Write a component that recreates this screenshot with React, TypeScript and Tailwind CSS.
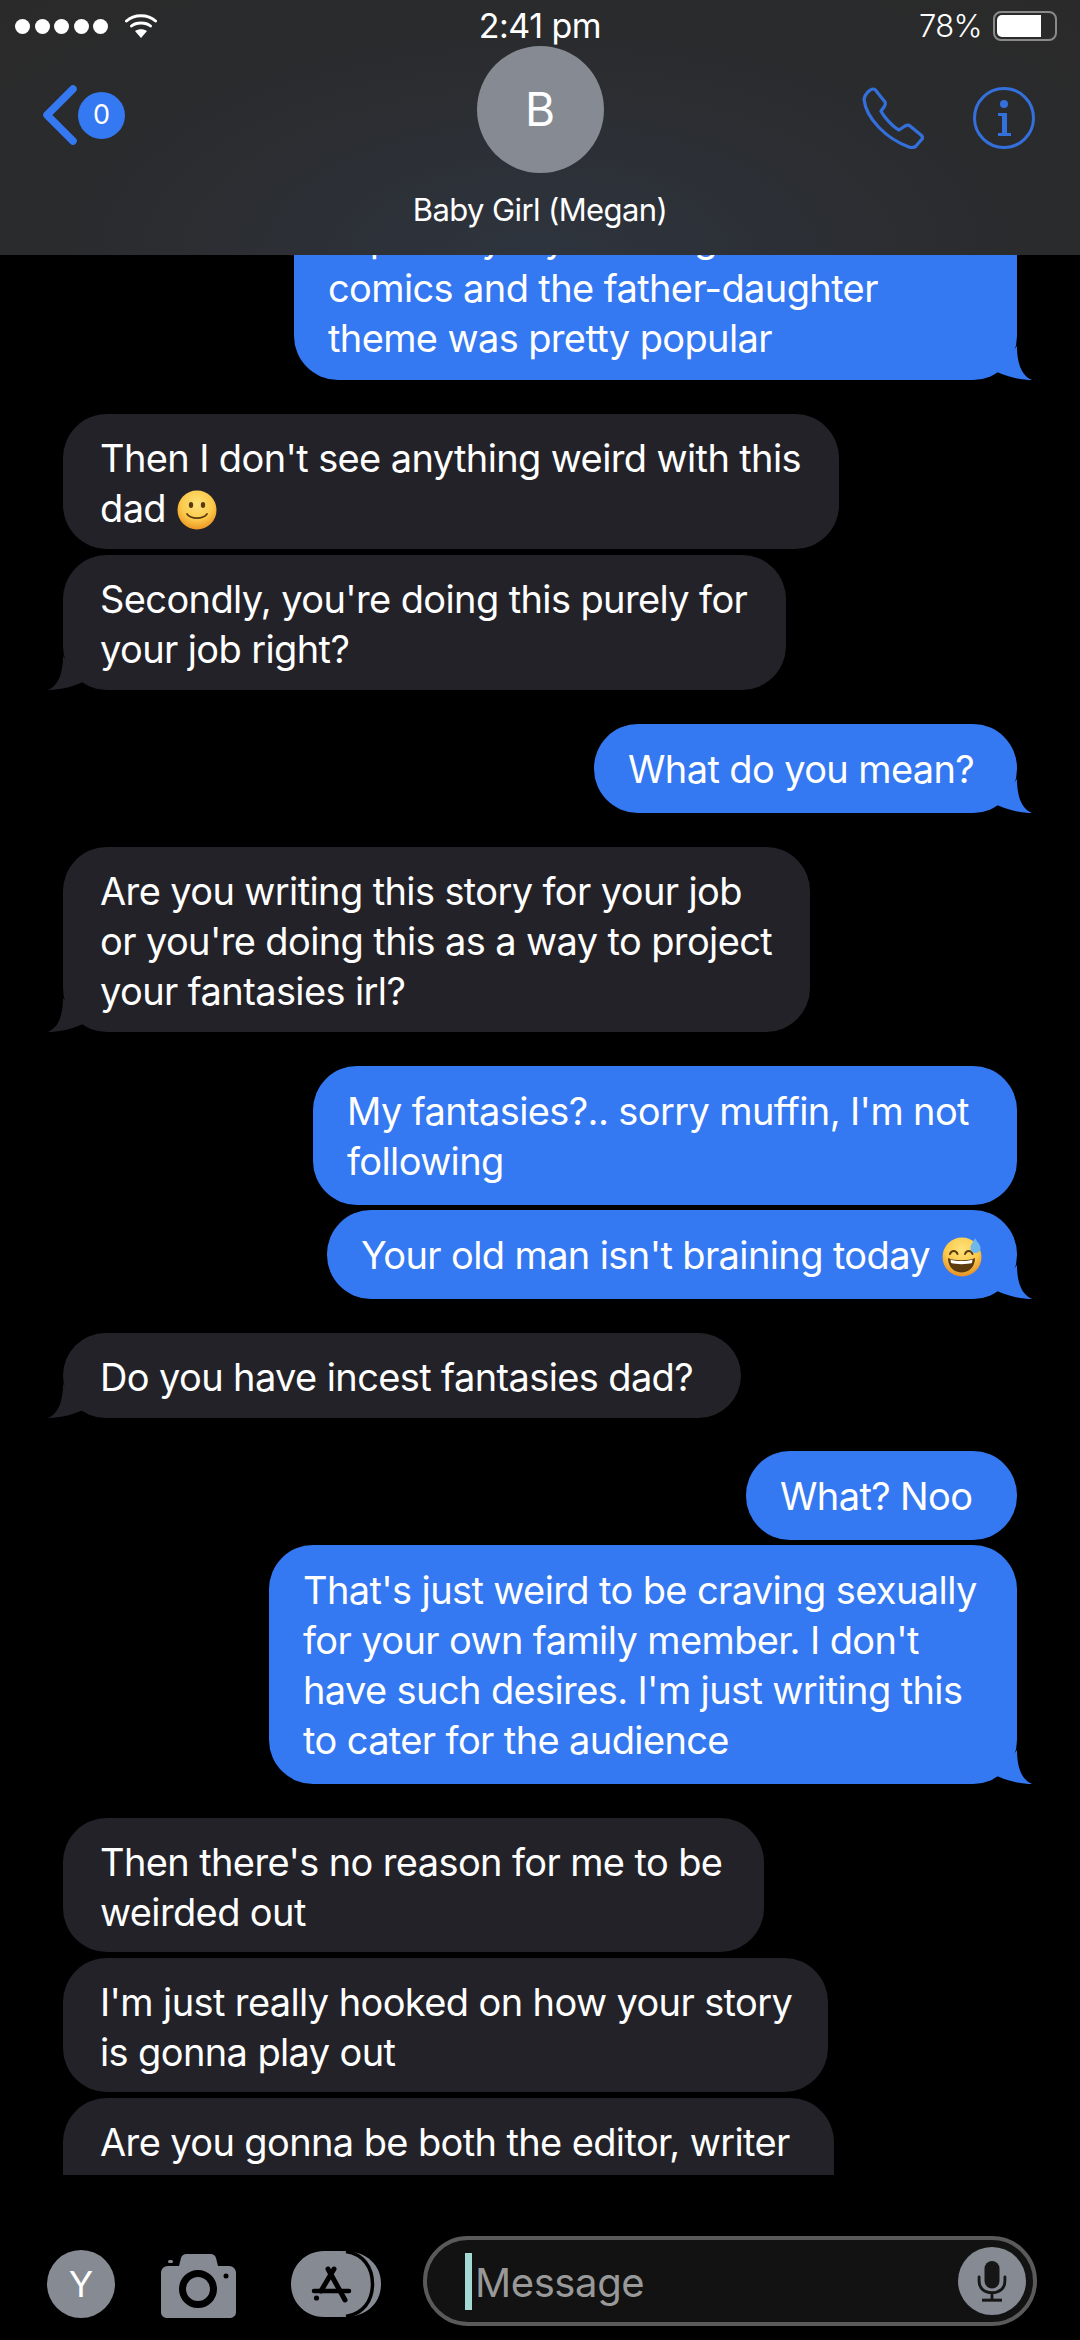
import React from 'react';

type Message = {
  lines: React.ReactNode[];
  mine?: boolean;
  tail?: boolean;
  box: string;
};

const SmileEmoji = () => (
  <svg viewBox="0 0 40 40" className="inline-block w-[40px] h-[40px] align-[-8px] ml-[1px]">
    <defs>
      <radialGradient id="smile" cx="50%" cy="35%" r="68%">
        <stop offset="0%" stopColor="#ffe27a" />
        <stop offset="60%" stopColor="#fbc94a" />
        <stop offset="100%" stopColor="#ea8f1e" />
      </radialGradient>
    </defs>
    <circle cx="20" cy="20" r="19.5" fill="url(#smile)" />
    <ellipse cx="14" cy="15" rx="2.2" ry="3" fill="#5c3a10" />
    <ellipse cx="26" cy="15" rx="2.2" ry="3" fill="#5c3a10" />
    <path d="M10 24 C14 29.5 26 29.5 30 24" fill="none" stroke="#5c3a10" strokeWidth="1.8" strokeLinecap="round" />
  </svg>
);

const SweatEmoji = () => (
  <svg viewBox="0 0 40 40" className="inline-block w-[40px] h-[40px] align-[-8px] ml-[2px]">
    <defs>
      <radialGradient id="sweat" cx="50%" cy="30%" r="72%">
        <stop offset="0%" stopColor="#ffe27a" />
        <stop offset="60%" stopColor="#fbc94a" />
        <stop offset="100%" stopColor="#e58a20" />
      </radialGradient>
    </defs>
    <circle cx="20" cy="20" r="19.5" fill="url(#sweat)" />
    <path d="M8 17 C9.5 13 14 13 15.5 17" fill="none" stroke="#5c3a10" strokeWidth="2" strokeLinecap="round" />
    <path d="M23 17 C24.5 13 29 13 30.5 17" fill="none" stroke="#5c3a10" strokeWidth="2" strokeLinecap="round" />
    <path d="M6 21 C12 24 27 24 33 21 C33 30 27 35.5 19.5 35.5 C12 35.5 6 30 6 21 Z" fill="#5c3a10" />
    <path d="M8.5 22.5 C14 24.5 25 24.5 30.5 22.5 L30 26 C25 27.5 14 27.5 9 26 Z" fill="#ffffff" />
    <path d="M33 1 C35 5 38.5 7.5 38.5 11 C38.5 14 36 16 33.5 16 C30.5 16 28.5 14 28.5 11 C28.5 7.5 31.5 5 33 1 Z" fill="#6fb9ea" />
  </svg>
);

const messages: Message[] = [
  {
    mine: true,
    tail: true,
    box: 'w-[723px] h-[184px] -mt-[59px]',
    lines: ['Especially my creating', 'comics and the father-daughter', 'theme was pretty popular'],
  },
  {
    box: 'w-[776px] h-[135px] mt-[34px]',
    lines: ["Then I don't see anything weird with this", <>dad <SmileEmoji /></>],
  },
  {
    tail: true,
    box: 'w-[723px] h-[135px] mt-[6px]',
    lines: ["Secondly, you're doing this purely for", 'your job right?'],
  },
  { mine: true, tail: true, box: 'w-[423px] h-[89px] mt-[34px]', lines: ['What do you mean?'] },
  {
    tail: true,
    box: 'w-[747px] h-[185px] mt-[34px]',
    lines: ['Are you writing this story for your job', "or you're doing this as a way to project", 'your fantasies irl?'],
  },
  {
    mine: true,
    box: 'w-[704px] h-[139px] mt-[34px]',
    lines: ["My fantasies?.. sorry muffin, I'm not", 'following'],
  },
  {
    mine: true,
    tail: true,
    box: 'w-[690px] h-[89px] mt-[5px]',
    lines: [<>Your old man isn't braining today <SweatEmoji /></>],
  },
  { tail: true, box: 'w-[678px] h-[85px] mt-[34px]', lines: ['Do you have incest fantasies dad?'] },
  { mine: true, box: 'w-[271px] h-[89px] mt-[33px]', lines: ['What? Noo'] },
  {
    mine: true,
    tail: true,
    box: 'w-[748px] h-[239px] mt-[5px]',
    lines: [
      "That's just weird to be craving sexually",
      "for your own family member. I don't",
      "have such desires. I'm just writing this",
      'to cater for the audience',
    ],
  },
  {
    box: 'w-[701px] h-[134px] mt-[34px]',
    lines: ["Then there's no reason for me to be", 'weirded out'],
  },
  {
    box: 'w-[765px] h-[134px] mt-[6px]',
    lines: ["I'm just really hooked on how your story", 'is gonna play out'],
  },
  {
    box: 'w-[771px] h-[134px] mt-[6px]',
    lines: ['Are you gonna be both the editor, writer', '\u00a0'],
  },
];

const Tail = ({ mine }: { mine?: boolean }) => (
  <svg
    viewBox="0 0 36 34"
    className={
      mine
        ? 'absolute bottom-0 -right-[15px] w-[36px] h-[34px] fill-[#3478f2]'
        : 'absolute bottom-0 -left-[15px] w-[36px] h-[34px] -scale-x-100 fill-[#232228]'
    }
  >
    <path d="M21 0 C21 14 24 29 36 34 C27 34 14 32 1 26 Z" />
  </svg>
);

const Bubble = ({ message }: { message: Message }) => (
  <div
    className={`relative flex-none flex flex-col justify-center rounded-[44px] text-[38px] leading-[50px] tracking-[-0.62px] text-white whitespace-nowrap ${message.box} ${
      message.mine ? 'self-end bg-[#3478f2] pl-[34px]' : 'self-start bg-[#232228] pl-[37px] pt-[3px]'
    }`}
  >
    {message.lines.map((line, i) => (
      <div key={i}>{line}</div>
    ))}
    {message.tail && <Tail mine={message.mine} />}
  </div>
);

const StatusBar = () => (
  <div className="grid grid-cols-3 items-center h-[52px] px-[15px] text-white">
    <div className="flex items-center">
      <div className="flex gap-[4.5px]">
        <span className="w-[15px] h-[15px] rounded-full bg-white" />
        <span className="w-[15px] h-[15px] rounded-full bg-white" />
        <span className="w-[15px] h-[15px] rounded-full bg-white" />
        <span className="w-[15px] h-[15px] rounded-full bg-white" />
        <span className="w-[15px] h-[15px] rounded-full bg-white" />
      </div>
      <svg viewBox="0 0 32 26" className="w-[32px] h-[26px] ml-[17px]">
        <path d="M1.5 8 C9 1 23 1 30.5 8" fill="none" stroke="#fff" strokeWidth="3" strokeLinecap="round" />
        <path d="M6.5 13 C11 9 21 9 25.5 13" fill="none" stroke="#fff" strokeWidth="3" strokeLinecap="round" />
        <path d="M10 18 L16 25 L22 18 C18.5 15.5 13.5 15.5 10 18 Z" fill="#fff" />
      </svg>
    </div>
    <div className="-mt-[2px] text-center text-[34px] tracking-[-0.5px] whitespace-nowrap">2:41 pm</div>
    <div className="flex items-center justify-end pr-[8px]">
      <span className="text-[31px] tracking-[-0.6px] font-light">78%</span>
      <div className="relative ml-[11px] w-[64px] h-[30px] rounded-[8px] border-[2px] border-[#8a8a8a] p-[2px]">
        <div className="w-[44px] h-full rounded-l-[5px] bg-white" />
      </div>
    </div>
  </div>
);

const Header = () => (
  <div className="flex-none h-[255px] bg-[radial-gradient(ellipse_at_50%_100%,#2e343e_0%,#2a2b2d_62%,#2a2a2a_100%)]">
    <StatusBar />
    <div className="grid grid-cols-3 -mt-[6px]">
      <div className="flex items-center pl-[41px] pt-[39px] self-start">
        <svg viewBox="0 0 38 60" className="w-[38px] h-[60px]">
          <path d="M32 4 L6 30 L32 56" fill="none" stroke="#3478f2" strokeWidth="7.5" strokeLinecap="round" strokeLinejoin="round" />
        </svg>
        <div className="-ml-[1px] w-[47px] h-[47px] rounded-full bg-[#3478f2] flex items-center justify-center text-[27px] text-white">
          0
        </div>
      </div>
      <div className="flex flex-col items-center">
        <div className="w-[127px] h-[127px] rounded-full bg-[#868a93] flex items-center justify-center text-[46px] text-white">
          B
        </div>
        <div className="mt-[17px] text-[31px] leading-[40px] tracking-[-0.6px] text-white whitespace-nowrap">Baby Girl (Megan)</div>
      </div>
      <div className="flex justify-end items-start gap-[49px] pr-[45px] pt-[41px]">
        <svg viewBox="0 0 62 62" className="w-[62px] h-[62px]">
          <path
            d="M2 12 C3 7 8 2 11 2 C13 2 14 3 15 5 L23 15 C24 17 23 18 22 20 L19 24 C22 30 31 40 37 43 L43 39 C45 38 47 38 48 39 L59 48 C61 50 61 51 60 52 L54 59 C52 61 50 61 47 60 C25 52 4 32 2 12 Z"
            fill="none"
            stroke="#3470dc"
            strokeWidth="3.2"
            strokeLinejoin="round"
          />
        </svg>
        <svg viewBox="0 0 62 62" className="w-[62px] h-[62px]">
          <circle cx="31" cy="31" r="29.5" fill="none" stroke="#3470dc" strokeWidth="3" />
          <circle cx="31" cy="17" r="4" fill="#3470dc" />
          <path d="M25 26 H34 V46 H38 V49 H25 V46 H29 V29 H25 Z" fill="#3470dc" />
        </svg>
      </div>
    </div>
  </div>
);

const Composer = () => (
  <div className="flex-none h-[165px] pt-[75px] pl-[47px] flex items-start">
    <div className="w-[68px] h-[68px] rounded-full bg-[#868a93] flex items-center justify-center text-[36px] text-white">
      Y
    </div>
    <svg viewBox="0 0 75 65" className="ml-[46px] mt-[3px] w-[75px] h-[65px]">
      <path
        d="M7 13 H18 L20 5 C21 2 23 1 25 1 H50 C52 1 54 2 55 5 L57 13 H68 C72 13 75 16 75 20 V59 C75 63 72 65 68 65 H7 C3 65 0 63 0 59 V20 C0 16 3 13 7 13 Z"
        fill="#868a93"
      />
      <rect x="7" y="7" width="5" height="3" rx="1.5" fill="#868a93" />
      <circle cx="37" cy="36" r="15.5" fill="#868a93" stroke="#000" strokeWidth="7" />
      <circle cx="65" cy="23" r="2.5" fill="#000" />
    </svg>
    <svg viewBox="0 0 90 66" className="ml-[55px] mt-[1px] w-[90px] h-[66px]">
      <path d="M52 0 C76 0 90 14 90 33 C90 52 76 66 52 66 Z" fill="#868a93" />
      <path d="M33 0 H50 C70 0 83 14 83 33 C83 52 70 66 50 66 H33 C15 66 0 52 0 33 C0 14 15 0 33 0 Z" fill="#868a93" />
      <path d="M55 0.5 C72 3 81.5 16 81.5 33 C81.5 50 72 63 55 65.5" fill="none" stroke="#000" strokeWidth="3.5" />
      <path d="M43 18 L30 40 M37 18 L54 49" stroke="#000" strokeWidth="5" strokeLinecap="round" fill="none" />
      <path d="M23 40 H58" stroke="#000" strokeWidth="4.5" strokeLinecap="round" />
      <circle cx="25.5" cy="47" r="2.6" fill="#000" />
    </svg>
    <div className="ml-[42px] -mt-[14px] w-[614px] h-[90px] rounded-full border-[4px] border-[#5a5a5a] bg-[#121212] flex items-center pl-[38px] pr-[7px]">
      <div className="w-[7px] h-[57px] bg-[#a3d9d2]" />
      <span className="ml-[3px] mt-[4px] text-[40px] tracking-[-0.4px] text-[#999999]">Message</span>
      <div className="ml-auto w-[68px] h-[68px] rounded-full bg-[#868a93] flex items-center justify-center">
        <svg viewBox="0 0 36 50" className="w-[30px] h-[48px]">
          <rect x="9" y="1" width="18" height="33" rx="9" fill="#161616" />
          <path d="M2.5 20 V25 C2.5 34 9 39 18 39 C27 39 33.5 34 33.5 25 V20" fill="none" stroke="#161616" strokeWidth="3.4" strokeLinecap="round" />
          <path d="M18 39 V47" stroke="#161616" strokeWidth="3.4" />
          <path d="M6 48 H30" stroke="#161616" strokeWidth="3.6" />
        </svg>
      </div>
    </div>
  </div>
);

export default function App() {
  return (
    <div className="w-[1080px] h-[2340px] bg-black overflow-hidden flex flex-col font-['Inter','Noto_Sans',sans-serif]">
      <Header />
      <div className="flex-none h-[1920px] overflow-hidden flex flex-col px-[63px]">
        {messages.map((message, i) => (
          <Bubble key={i} message={message} />
        ))}
      </div>
      <Composer />
    </div>
  );
}
